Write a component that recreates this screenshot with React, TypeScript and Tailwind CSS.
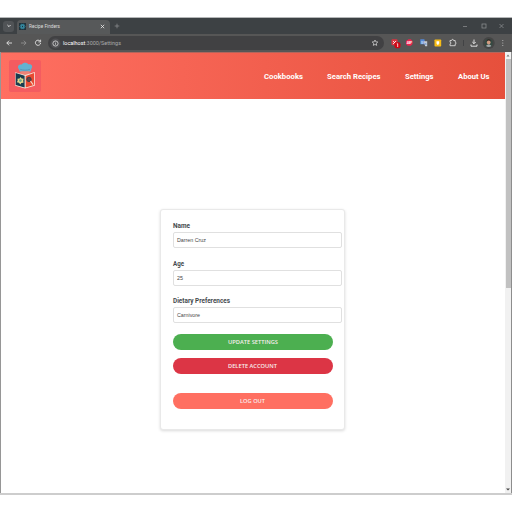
import React from 'react';

const links = [
  { label: 'Cookbooks', box: 'w-[39px]', width: 39 },
  { label: 'Search Recipes', box: 'w-[54px]', width: 53.5 },
  { label: 'Settings', box: 'w-[29px]', width: 28.5 },
  { label: 'About Us', box: 'w-[32px]', width: 31.5 },
];

function Label({ text, width, size = 6 }: { text: string; width: number; size?: number }) {
  return (
    <svg width={width} height="10" className="block shrink-0 overflow-visible" fill="currentColor">
      <text x="0" y="7.3" fontSize={size} textLength={width} lengthAdjust="spacingAndGlyphs">{text}</text>
    </svg>
  );
}

function Logo() {
  return (
    <div className="ml-[7.5px] flex size-8 items-center justify-center rounded-[2px] bg-[#f45c60]">
      <svg width="32" height="32" viewBox="0 0 32 32">
        <path d="M10.8 11.8 9.8 9C7.6 6 10.2 3.9 12.7 4.5c1.3-2.2 5.3-2.4 6.6-.2 2.9-.7 5 1.7 3.2 4.2l-1.1 3.3Z" fill="#62b2d1" />
        <path d="M11.2 9.3c2.8 1.1 6.8 1.1 9.8 0" fill="none" stroke="#548fb0" strokeWidth=".8" />
        <path d="M11.5 11.3h9v2.4L16 15.4l-4.5-1.7Z" fill="#ec8377" />
        <path d="M6.3 12.2 16 15.1l9.8-3.2v13.9L16 28.6l-9.7-2.9Z" fill="#f6e5d8" />
        <path d="M6.7 13.1 15.6 15.8v11.7L6.7 25Z" fill="#173c50" />
        <path d="M16.7 16 25 13.1V25l-8.3 2.5Z" fill="#e84a32" />
        <path d="M11.6 17 12.6 18.5l2 .3-.4 2 .3 2-2.2.3-1 1.3-1.3-1.7-2.1-.4.8-1.8-.3-1.7 2.2-.2Z" fill="#e7d78b" />
        <circle cx="11.4" cy="20.6" r="1.4" fill="#65aa8d" />
        <circle cx="20" cy="19.4" r="2.2" fill="#604449" stroke="#303d4c" strokeWidth=".9" />
        <path d="m21.5 21 2.6 3.6" stroke="#f3d5c7" strokeWidth="1.2" />
      </svg>
    </div>
  );
}

function TabBar() {
  return (
    <div className="flex h-4 items-center bg-[#3d4144] text-[#dedede]">
      <div className="ml-[3px] flex h-[11px] w-[11px] items-center justify-center rounded-[3px] bg-[#505356]">
        <svg width="6" height="6" fill="none" stroke="#eee" strokeWidth=".9"><path d="m1.4 2 1.6 1.6L4.6 2" /></svg>
      </div>
      <div className="ml-[3px] flex h-[14px] w-[93px] items-center self-end rounded-t-[4px] bg-[#57595a] pl-[2px]">
        <svg width="7" height="7" className="-mt-[2px] bg-[#20333c]" fill="none" stroke="#3b9db8" strokeWidth=".6">
          <ellipse cx="3.5" cy="3.5" rx="2.6" ry="1.1" />
          <ellipse cx="3.5" cy="3.5" rx="2.6" ry="1.1" transform="rotate(60 3.5 3.5)" />
          <ellipse cx="3.5" cy="3.5" rx="2.6" ry="1.1" transform="rotate(120 3.5 3.5)" />
        </svg>
        <div className="-mt-[2px] ml-[3px]"><Label text="Recipe Finders" width={31} size={5.6} /></div>
        <svg className="-mt-[2px] ml-[40px]" width="5" height="5" stroke="#eee" strokeWidth=".8"><path d="m.8.8 3.4 3.4M4.2.8.8 4.2" /></svg>
      </div>
      <svg className="ml-[4px]" width="6" height="6" stroke="#929496" strokeWidth=".7"><path d="M3 .7v4.6M.7 3h4.6" /></svg>
      <svg className="mr-[6px] ml-auto" width="44" height="8" fill="none" stroke="#929496" strokeWidth=".7">
        <path d="M1 4.5h4M37.5 2l4 4M41.5 2l-4 4" /><rect x="20" y="2" width="4" height="4" />
      </svg>
    </div>
  );
}

function Toolbar() {
  return (
    <div className="flex h-[18px] items-center bg-[#565656]">
      <svg width="48" height="18" fill="none" stroke="#e4e4e4" strokeWidth=".9" className="shrink-0">
        <path d="M12 9H6.8M9.1 6.7 6.8 9l2.3 2.3" />
        <path d="M21 9h5M23.8 6.7 26.1 9l-2.3 2.3" stroke="#909090" />
        <path d="M40.1 7.2A2.6 2.6 0 1 0 40.6 9M40.6 5.7v2.2h-2.2" />
      </svg>
      <div className="flex h-[14px] w-[336px] shrink-0 items-center rounded-full bg-[#414143] pr-[5px] pl-[2px]">
        <svg width="11" height="11" fill="none" stroke="#ddd" strokeWidth=".8" className="shrink-0">
          <circle cx="5.5" cy="5.5" r="5" fill="#515154" stroke="none" />
          <circle cx="5.5" cy="5.5" r="2.6" /><path d="M5.5 5.2v1.5M5.5 3.8v.6" />
        </svg>
        <svg width="60" height="10" className="ml-[2px] block shrink-0 overflow-visible" fontSize="5.8">
          <text x="0" y="7.3" textLength="58" lengthAdjust="spacingAndGlyphs" fill="#fff">localhost<tspan fill="#a9a9ab">:3000/Settings</tspan></text>
        </svg>
        <svg className="ml-auto" width="8" height="8" fill="none" stroke="#e0e0e0" strokeWidth=".7"><path d="m4 1 .8 1.8 2 .2-1.5 1.4.4 2L4 5.4l-1.7 1 .4-2L1.2 3l2-.2Z" /></svg>
      </div>
      <svg width="128" height="18" viewBox="384 0 128 18" className="shrink-0">
        <rect x="391.5" y="5.3" width="6" height="6" rx="1" fill="#dc3541" />
        <path d="m393 7 3 3M396 7l-3 3" stroke="#fff" strokeWidth=".8" />
        <rect x="394.5" y="8.3" width="6" height="6" rx="2" fill="#cf0715" />
        <path d="M396.8 9.8h.9v3.2" fill="none" stroke="#fff" strokeWidth=".8" />
        <path d="m407.5 6 1-.8h2.3l1.7 1.7v3.2l-1.7 1.7h-3L406 10.2V7.1Z" fill="#ed244c" />
        <text x="406.7" y="9.8" fontSize="2.7" fontWeight="700" fill="#fff">ABP</text>
        <path d="M420.3 5.3h4l1.4 5h-5.4Z" fill="#548ad8" />
        <path d="M423.6 7.2h3.6v5h-2Z" fill="#c9ced5" />
        <text x="421" y="9.5" fontSize="3.6" fill="#fff">G</text>
        <path d="m424.8 8.8 1.8 2.3M426.5 8.8l-1.7 2.3" stroke="#4e82cd" strokeWidth=".5" />
        <rect x="434.5" y="5.5" width="6.7" height="7" rx=".7" fill="#f7bd16" />
        <path d="M436.5 7.2h2.7v2.5h-.6v1h-1.5v-1h-.6Z" fill="#fff" />
        <path d="M450 6.5h1.6c0-1.5 2-1.5 2 0h1.6v1.7c1.3 0 1.3 1.7 0 1.7v1.8H450V9.9c1.3 0 1.3-1.7 0-1.7Z" fill="none" stroke="#e4e4e4" strokeWidth=".8" />
        <path d="M463.5 6v6" stroke="#3f4143" strokeWidth=".9" />
        <path d="M474 5.5v4M472.3 8l1.7 1.7 1.7-1.7M471 10.5v1.7h6v-1.7" fill="none" stroke="#eee" strokeWidth=".9" />
        <circle cx="488.7" cy="9" r="6" fill="#454545" /><circle cx="488.7" cy="9" r="4" fill="#344a42" />
        <ellipse cx="488.7" cy="8.2" rx="1.8" ry="2.3" fill="#d29b80" /><path d="M486 12c1.3-2 4-2 5.4 0-1.5 1.3-4 1.3-5.4 0" fill="#a2a9aa" />
        <path d="M486.7 7.4c-.2-3.2 4.6-2.8 3.9 0-.8-1.1-3-1.1-3.9 0" fill="#302522" />
        <circle cx="502.8" cy="6.6" r=".5" fill="#ccc" /><circle cx="502.8" cy="9" r=".5" fill="#ccc" /><circle cx="502.8" cy="11.4" r=".5" fill="#ccc" />
      </svg>
    </div>
  );
}

function Field({ label, labelWidth, value, valueWidth }: { label: string; labelWidth: number; value: string; valueWidth: number }) {
  return (
    <div className="mb-[10.5px] w-[169px]">
      <div className="mb-px h-[10px] font-bold text-[#454a4e]"><Label text={label} width={labelWidth} size={6.7} /></div>
      <div className="flex h-4 items-center rounded-[2px] border border-[#e0e0e0] bg-white pl-[3.5px] font-['Liberation_Sans',sans-serif] text-[#474747]">
        <Label text={value} width={valueWidth} size={5.8} />
      </div>
    </div>
  );
}

function Action({ text, width, color }: { text: string; width: number; color: string }) {
  return (
    <button className={`flex h-4 w-[160px] items-center justify-center rounded-full font-['Open_Sans',sans-serif] font-semibold text-[#f8eeee] ${color}`}>
      <Label text={text} width={width} size={5.9} />
    </button>
  );
}

export default function App() {
  return (
    <div className="h-[512px] w-[512px] overflow-hidden bg-white pt-[17px] font-['Roboto',sans-serif]">
      <div className="border-t border-[#b5b7b8]"><TabBar /><Toolbar /></div>
      <div className="flex h-[443px] border-b-2 border-[#cdcdcd]">
        <main className="w-[505px] border-l border-[#969696]">
          <header className="flex h-[47px] items-center border-t border-[#b5655b] bg-gradient-to-r from-[#ff6f61] to-[#e6503c] font-bold text-white">
            <Logo />
            <nav className="mt-px mr-[15.5px] ml-auto flex gap-6">
              {links.map((link) => (
                <a key={link.label} className={link.box}><Label text={link.label} width={link.width} size={7.9} /></a>
              ))}
            </nav>
          </header>
          <section className="mt-[110px] ml-[159px] h-[221px] w-[185px] rounded-[3px] border border-[#e9e9e9] bg-white pt-[11px] pl-[11.5px] shadow-[0_1px_3px_rgba(0,0,0,.15)]">
            <Field label="Name" labelWidth={17} value="Darren Cruz" valueWidth={29} />
            <Field label="Age" labelWidth={11} value="25" valueWidth={6} />
            <Field label="Dietary Preferences" labelWidth={57} value="Carnivore" valueWidth={23} />
            <Action text="UPDATE SETTINGS" width={50} color="bg-[#4caf50]" />
            <div className="mt-2"><Action text="DELETE ACCOUNT" width={49} color="bg-[#dc3545]" /></div>
            <div className="mt-[19px]"><Action text="LOG OUT" width={25} color="bg-[#ff6f61]" /></div>
          </section>
        </main>
        <aside className="flex w-[6px] flex-col items-center bg-[#f1f1f1]">
          <svg width="6" height="7"><path d="m1.5 4.5 1.5-2 1.5 2Z" fill="#777" /></svg>
          <div className="h-[229px] w-[5px] bg-[#c1c1c1]" />
          <svg className="mt-auto" width="6" height="7"><path d="m1 2.5 2 2 2-2Z" fill="#444" /></svg>
        </aside>
        <div className="w-px bg-[#8d8d8d]" />
      </div>
    </div>
  );
}
